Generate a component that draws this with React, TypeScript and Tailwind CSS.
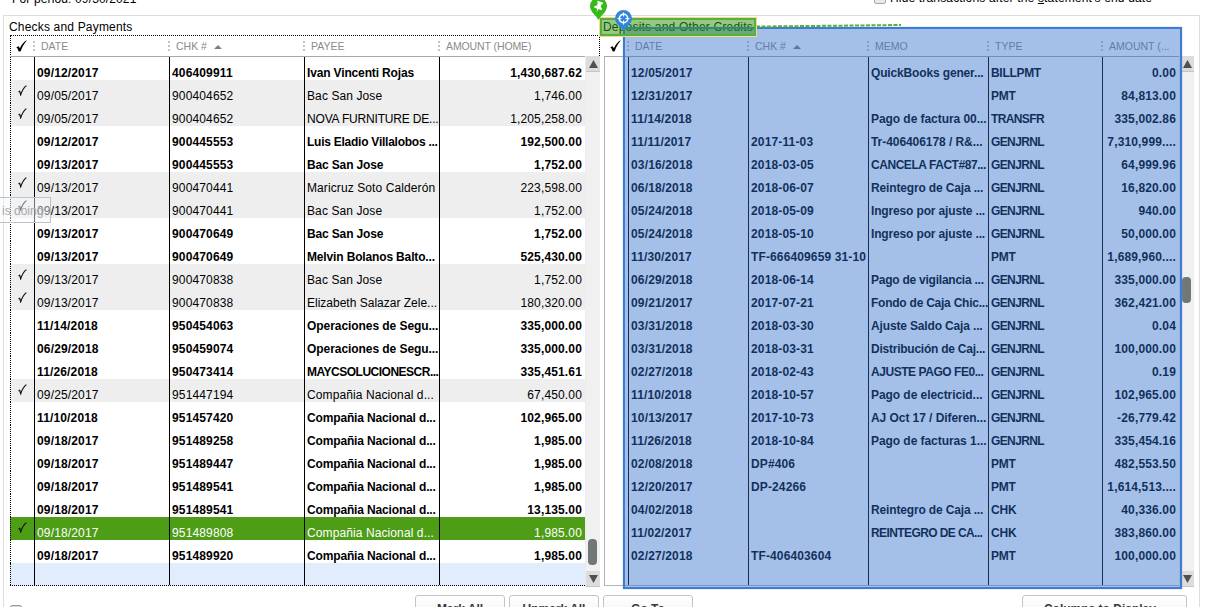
import React from "react";

type Row = { cells: string[]; cleared?: boolean; selected?: boolean };

const payments: Row[] = [
  { cells: ["09/12/2017", "406409911", "Ivan Vincenti Rojas", "1,430,687.62"] },
  { cells: ["09/05/2017", "900404652", "Bac San Jose", "1,746.00"], cleared: true },
  { cells: ["09/05/2017", "900404652", "NOVA FURNITURE DE...", "1,205,258.00"], cleared: true },
  { cells: ["09/12/2017", "900445553", "Luis Eladio Villalobos ...", "192,500.00"] },
  { cells: ["09/13/2017", "900445553", "Bac San Jose", "1,752.00"] },
  { cells: ["09/13/2017", "900470441", "Maricruz Soto Calderón", "223,598.00"], cleared: true },
  { cells: ["09/13/2017", "900470441", "Bac San Jose", "1,752.00"], cleared: true },
  { cells: ["09/13/2017", "900470649", "Bac San Jose", "1,752.00"] },
  { cells: ["09/13/2017", "900470649", "Melvin Bolanos Balto...", "525,430.00"] },
  { cells: ["09/13/2017", "900470838", "Bac San Jose", "1,752.00"], cleared: true },
  { cells: ["09/13/2017", "900470838", "Elizabeth Salazar Zele...", "180,320.00"], cleared: true },
  { cells: ["11/14/2018", "950454063", "Operaciones de Segu...", "335,000.00"] },
  { cells: ["06/29/2018", "950459074", "Operaciones de Segu...", "335,000.00"] },
  { cells: ["11/26/2018", "950473414", "MAYCSOLUCIONESCR...", "335,451.61"] },
  { cells: ["09/25/2017", "951447194", "Compañia Nacional d...", "67,450.00"], cleared: true },
  { cells: ["11/10/2018", "951457420", "Compañia Nacional d...", "102,965.00"] },
  { cells: ["09/18/2017", "951489258", "Compañia Nacional d...", "1,985.00"] },
  { cells: ["09/18/2017", "951489447", "Compañia Nacional d...", "1,985.00"] },
  { cells: ["09/18/2017", "951489541", "Compañia Nacional d...", "1,985.00"] },
  { cells: ["09/18/2017", "951489541", "Compañia Nacional d...", "13,135.00"] },
  { cells: ["09/18/2017", "951489808", "Compañia Nacional d...", "1,985.00"], cleared: true, selected: true },
  { cells: ["09/18/2017", "951489920", "Compañia Nacional d...", "1,985.00"] },
];

const deposits: Row[] = [
  { cells: ["12/05/2017", "", "QuickBooks gener...", "BILLPMT", "0.00"] },
  { cells: ["12/31/2017", "", "", "PMT", "84,813.00"] },
  { cells: ["11/14/2018", "", "Pago de factura 00...", "TRANSFR", "335,002.86"] },
  { cells: ["11/11/2017", "2017-11-03", "Tr-406406178 / R&...", "GENJRNL", "7,310,999...."] },
  { cells: ["03/16/2018", "2018-03-05", "CANCELA FACT#87...", "GENJRNL", "64,999.96"] },
  { cells: ["06/18/2018", "2018-06-07", "Reintegro de Caja ...", "GENJRNL", "16,820.00"] },
  { cells: ["05/24/2018", "2018-05-09", "Ingreso por ajuste ...", "GENJRNL", "940.00"] },
  { cells: ["05/24/2018", "2018-05-10", "Ingreso por ajuste ...", "GENJRNL", "50,000.00"] },
  { cells: ["11/30/2017", "TF-666409659 31-10", "", "PMT", "1,689,960...."] },
  { cells: ["06/29/2018", "2018-06-14", "Pago de vigilancia ...", "GENJRNL", "335,000.00"] },
  { cells: ["09/21/2017", "2017-07-21", "Fondo de Caja Chic...", "GENJRNL", "362,421.00"] },
  { cells: ["03/31/2018", "2018-03-30", "Ajuste Saldo Caja ...", "GENJRNL", "0.04"] },
  { cells: ["03/31/2018", "2018-03-31", "Distribución de Caj...", "GENJRNL", "100,000.00"] },
  { cells: ["02/27/2018", "2018-02-43", "AJUSTE PAGO FE0...", "GENJRNL", "0.19"] },
  { cells: ["11/10/2018", "2018-10-57", "Pago de electricid...", "GENJRNL", "102,965.00"] },
  { cells: ["10/13/2017", "2017-10-73", "AJ Oct 17 / Diferen...", "GENJRNL", "-26,779.42"] },
  { cells: ["11/26/2018", "2018-10-84", "Pago de facturas 1...", "GENJRNL", "335,454.16"] },
  { cells: ["02/08/2018", "DP#406", "", "PMT", "482,553.50"] },
  { cells: ["12/20/2017", "DP-24266", "", "PMT", "1,614,513...."] },
  { cells: ["04/02/2018", "", "Reintegro de Caja ...", "CHK", "40,336.00"] },
  { cells: ["11/02/2017", "", "REINTEGRO DE CA...", "CHK", "383,860.00"] },
  { cells: ["02/27/2018", "TF-406403604", "", "PMT", "100,000.00"] },
];

const paymentGrid = "grid grid-cols-[24px_135px_135px_135px_146px]";
const depositGrid = "grid grid-cols-[24px_120px_120px_120px_114px_77px]";

function tracking(text: string, bold: boolean) {
  if (/^-?\d/.test(text)) return "tracking-[0.15px]";
  if (/^(TF|DP)/.test(text)) return "tracking-[0.13px]";
  if (/^MAYC/.test(text)) return "tracking-[-0.5px]";
  if (/^NOVA/.test(text)) return "tracking-[-0.18px]";
  if (/^BILL/.test(text)) return "tracking-[-0.3px]";
  if (/^(PMT|CHK)/.test(text)) return "tracking-[-0.2px]";
  if (/^(GENJ|TRAN)/.test(text)) return "tracking-[-0.62px]";
  if (/^REINT/.test(text)) return "tracking-[-0.6px]";
  if (/^[A-Z]{6}/.test(text)) return "tracking-[-0.45px]";
  if (/^Luis/.test(text)) return "tracking-[-0.25px]";
  if (/^(Fondo|Distr|Pago de vig)/.test(text)) return "tracking-[-0.24px]";
  if (/^(Ivan|Eliz)/.test(text)) return bold ? "tracking-[-0.15px]" : "tracking-[0px]";
  if (/^(Oper|Pago|Tr-|AJ )/.test(text)) return "tracking-[-0.06px]";
  return bold ? "tracking-[-0.15px]" : "tracking-[0.1px]";
}

function HeaderCheck() {
  return (
    <svg width="11" height="12" viewBox="0 0 11 12" className="block">
      <path d="M0.3 7.2 2.6 6.2 3.9 8.3C5.500 4.800 7.500 2 10.500 0.200L10.600 0.700C8.200 3.500 6 7 4.700 11.200L2.600 11.400C2.200 9.700 1.500 8.100 0.300 7.200Z" fill="#000" />
    </svg>
  );
}

function RowCheck() {
  return (
    <svg width="9" height="11" viewBox="0 0 9 11" className="block">
      <path d="M0.500 6.800 1.700 6.300 2.700 9.800C3.900 6 6 2.300 8.400 0.600" fill="none" stroke="#111" strokeWidth="1.150" />
    </svg>
  );
}

function HeaderCell({ label, sorted }: { label: string; sorted?: boolean }) {
  return (
    <div className="flex h-[21px] items-center whitespace-nowrap text-[10.5px] text-[#8a8a8a]">
      <svg width="2" height="11" className="ml-[-1px] shrink-0">
        <path d="M1 0V11" stroke="#aaa" strokeWidth="1.4" strokeDasharray="2 2" />
      </svg>
      <span className={label === "AMOUNT (HOME)" ? "ml-1.5 tracking-[-0.1px]" : "ml-1.5"}>{label}</span>
      {sorted && (
        <svg width="8" height="4" className="ml-[7px]">
          <path d="M4 0 8 4H0Z" fill="#808080" />
        </svg>
      )}
    </div>
  );
}

function Table({ rows, headers, grid, payment }: { rows: Row[]; headers: string[]; grid: string; payment?: boolean }) {
  return (
    <div className="w-[575px]">
      <div className={`${grid} h-[21px] border-b border-[#a8a8a8]`}>
        <div className="pl-[6px] pt-1">
          <HeaderCheck />
        </div>
        {headers.map((h, i) => (
          <HeaderCell key={h} label={h} sorted={i === 1} />
        ))}
      </div>
      {rows.map((row, r) => {
        const bold = !row.cleared;
        return (
          <div
            key={r}
            className={`${grid} h-[23px] text-[12px] ${
              row.selected ? "bg-[#4d9d17] text-white" : row.cleared ? "bg-[#eeeeee] text-black" : "font-bold text-black"
            }`}
          >
            <div className={payment ? "border-l border-dotted border-black pl-[7px] pt-[5px]" : "border-l border-[#b5b5b5]"}>
              {row.cleared && <RowCheck />}
            </div>
            {row.cells.map((c, i) => (
              <div
                key={i}
                className={`whitespace-nowrap border-l border-black pl-[2px] pt-[6px] ${
                  i === row.cells.length - 1 ? "pr-[3px] text-right" : ""
                } ${tracking(c, bold)}`}
              >
                <span className="block h-[17px] leading-[21px]">{c}</span>
              </div>
            ))}
          </div>
        );
      })}
      <div className={`${grid} h-[23px] border-b ${payment ? "border-dotted border-black bg-[#e1ecfd]" : "border-[#b5b5b5]"}`}>
        <div className={payment ? "border-l border-dotted border-black" : "border-l border-[#b5b5b5]"} />
        {headers.map((h) => (
          <div key={h} className="border-l border-black" />
        ))}
      </div>
    </div>
  );
}

function ScrollBar({ low }: { low?: boolean }) {
  return (
    <div className="mt-[20px] flex h-[531px] w-[15px] flex-col border-b border-l border-b-[#c4c4c4] border-l-[#ececec] bg-[#f0f0f0]">
      <div className="flex h-4 shrink-0 items-center justify-center border-b border-[#c4c4c4] bg-[#dcdcdc]">
        <svg width="9" height="8">
          <path d="M4.5 0 9 8H0Z" fill="#505050" />
        </svg>
      </div>
      <div className="flex-1">
        <div className={`ml-[2px] h-[26px] w-[9px] rounded-[4px] bg-[#717777] ${low ? "mt-[467px]" : "mt-[205px]"}`} />
      </div>
      <div className="flex h-[15px] shrink-0 items-center justify-center bg-[#dcdcdc]">
        <svg width="9" height="8">
          <path d="M0 0H9L4.5 8Z" fill="#505050" />
        </svg>
      </div>
    </div>
  );
}

function Button({ label, className }: { label: string; className: string }) {
  return (
    <div
      className={`h-7 shrink-0 rounded-[3px] border border-[#c4c4c4] bg-linear-to-b from-white to-[#f2f2f2] text-center text-[12px] font-bold leading-[26px] text-[#393939] ${className}`}
    >
      {label}
    </div>
  );
}

export default function App() {
  return (
    <div className="relative flex h-[607px] w-[1209px] flex-col overflow-hidden bg-white font-['Liberation_Sans',Arial,sans-serif] text-black">
      <div className="flex h-[15px] shrink-0 text-[12px]">
        <span className="-mt-[9px] ml-3 w-[862px] text-[12px] leading-4 tracking-[0.14px]">For period: 09/30/2021</span>
        <span className="-mt-2 h-3 w-3 rounded-[2px] border border-[#aaa] bg-[#e8e8e8]" />
        <span className="-mt-[10px] ml-1 whitespace-nowrap leading-4 tracking-[0.16px]">
          Hide transactions after the <u>s</u>tatement's end date
        </span>
      </div>

      <div className="ml-[3px] flex h-[592px] w-[1197px] shrink-0 flex-col border-x border-t border-[#dddddd]">
        <div className="flex h-[19px] shrink-0 pt-[4px] text-[12px] leading-[14px]">
          <span className="ml-[5px] w-[594px] tracking-[0.18px]">Checks and Payments</span>
          <span className="tracking-[0.2px]">Deposits and Other Credits</span>
        </div>
        <div className="ml-[6px] flex h-[552px] shrink-0">
          <div className="w-[590px]">
            <div className="border-t border-dotted border-black" />
            <div className="flex h-[551px] before:-mr-px before:h-[21px] before:w-px before:border-l before:border-dotted before:border-black after:-ml-px after:h-[20px] after:w-px after:border-l after:border-dotted after:border-black">
              <Table rows={payments} headers={["DATE", "CHK #", "PAYEE", "AMOUNT (HOME)"]} grid={paymentGrid} payment />
              <ScrollBar low />
            </div>
          </div>
          <div className="ml-1 mt-px flex h-[551px]">
            <Table rows={deposits} headers={["DATE", "CHK #", "MEMO", "TYPE", "AMOUNT (..."]} grid={depositGrid} />
            <ScrollBar />
          </div>
        </div>
        <div className="mt-2 flex">
          <span className="ml-[6px] mt-[10px] h-3 w-3 rounded-[2px] border border-[#999] bg-[#ddd]" />
          <Button label="Mark All" className="ml-[393px] w-[90px]" />
          <Button label="Unmark All" className="ml-1 w-[90px]" />
          <Button label="Go To" className="ml-1 w-[90px]" />
          <Button label="Columns to Display..." className="ml-[329px] w-[165px]" />
        </div>
      </div>

      <div className="absolute left-[623px] top-[27px] h-[562px] w-[559px] border-2 border-[#3c7dd3] bg-[rgba(44,110,203,0.43)] bg-clip-padding shadow-[0_0_1px_#6f9be0]" />
      <svg className="absolute left-[755px] top-[23px]" width="148" height="5">
        <path d="M1 3.6 146 2" fill="none" stroke="#58b034" strokeWidth="2" strokeDasharray="4 1.5" />
      </svg>
      <div className="absolute left-[600px] top-[18px] h-[18px] w-[156px] border-2 border-[#59b037] bg-[rgba(50,150,20,0.52)] bg-clip-padding shadow-[0_0_0_1px_#f5d79b]" />
      <svg className="absolute left-[589px] top-[-4px]" width="19" height="25" viewBox="0 0 19 25">
        <path d="M9.5 24C7 19 1 16 1 10a8.5 8.5 0 0 1 17 0c0 6-6 9-8.5 14Z" fill="#35ba18" />
        <g transform="rotate(20 9.5 11)" fill="#fff">
          <path d="M6.500 5.500h6V7h-1v3l2 1.500v1.500h-3.300l-.7 3.500-.7-3.500H5.500v-1.500l2-1.500V7h-1Z" />
        </g>
      </svg>
      <svg className="absolute left-[614px] top-[9px]" width="19" height="22" viewBox="0 0 19 22">
        <path d="M9.5 22C7.5 18 1 15 1 9.500a8.500 8.500 0 0 1 17 0C18 15 11.500 18 9.500 22Z" fill="#3285dd" />
        <circle cx="9.500" cy="9.500" r="4.200" fill="none" stroke="#fff" strokeWidth="1.500" />
        <path d="M9.500 3.500v4M9.500 11.500v4M3.500 9.500h4M11.500 9.500h4" stroke="#fff" strokeWidth="1.200" />
      </svg>
      <div className="absolute left-[-2px] top-[197px] h-[26px] w-[53px] border border-[#bfc1c4] bg-[rgba(245,248,253,0.45)] pl-[3px] text-[12px] leading-[27px] text-[#aaa]">
        is doing
      </div>
    </div>
  );
}
